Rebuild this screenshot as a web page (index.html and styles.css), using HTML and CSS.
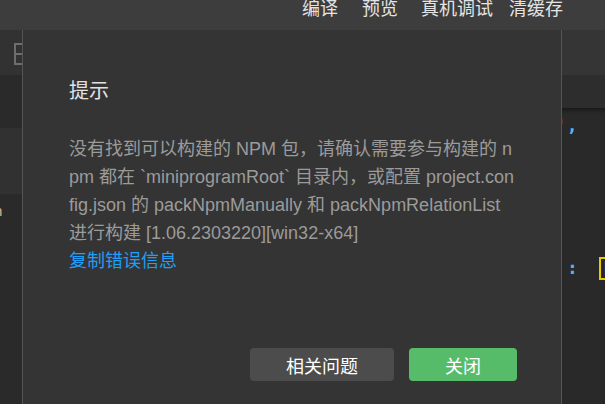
FILE: index.html
```html
<!DOCTYPE html>
<html>
<head>
    <meta charset="UTF-8">
    <title>提示</title>
    <link rel="stylesheet" href="styles.css">
</head>
<body>
    <div class="toolbar">
        <span class="tool">编译</span>
        <span class="tool gap-24">预览</span>
        <span class="tool gap-23">真机调试</span>
        <span class="tool gap-16">清缓存</span>
    </div>

    <div class="workspace">
        <div class="sidebar">
            <div class="side-head">
                <svg class="side-icon" width="16" height="22" viewBox="0 0 16 22">
                    <rect x="1" y="1" width="13" height="20" fill="none" stroke="#6e6e6e" stroke-width="2"/>
                    <line x1="1" y1="11" x2="14" y2="11" stroke="#6e6e6e" stroke-width="2"/>
                </svg>
            </div>
            <div class="side-band dark"></div>
            <div class="side-band light"></div>
            <div class="side-files">
                <div class="file-line">n</div>
            </div>
        </div>

        <div class="editor">
            <div class="tabs"></div>
            <div class="crumbs"></div>
            <div class="code">
                <div class="code-line first"><span class="tok-str">e'</span><span class="tok-punc">,</span></div>
                <div class="code-line second"><span class="tok-punc colon">:</span><span class="bracket">[</span></div>
            </div>
        </div>
    </div>

    <div class="dialog">
        <div class="dialog-title">提示</div>
        <div class="dialog-body">
            没有找到可以构建的 NPM 包，请确认需要参与构建的 n<br>
            pm 都在 `miniprogramRoot` 目录内，或配置 project.con<br>
            fig.json 的 packNpmManually 和 packNpmRelationList<br>
            进行构建 [1.06.2303220][win32-x64]
        </div>
        <a class="copy-link">复制错误信息</a>
        <div class="dialog-actions">
            <button class="btn btn-gray">相关问题</button>
            <button class="btn btn-green">关闭</button>
        </div>
    </div>
</body>
</html>
```

FILE: styles.css
```css
html, body {
    margin: 0;
    height: 100%;
    overflow: hidden;
}
body {
    background-color: #2b2b2b;
    font-family: "Liberation Sans", "Noto Sans CJK SC", sans-serif;
    position: relative;
}
.toolbar {
    height: 30px;
    background-color: #3d3d3d;
    display: flex;
    justify-content: flex-end;
    align-items: flex-start;
    padding-right: 42px;
    box-sizing: border-box;
}
.tool {
    color: #e4e4e4;
    font-size: 18px;
    line-height: 18px;
}
.gap-24 { margin-left: 24px; }
.gap-23 { margin-left: 23px; }
.gap-16 { margin-left: 16px; }

.workspace {
    display: flex;
    height: 374px;
}
.sidebar {
    flex: none;
    width: 540px;
    display: flex;
    flex-direction: column;
}
.side-head {
    height: 45px;
    background-color: #323232;
}
.side-icon {
    margin: 13px 0 0 14px;
    display: block;
}
.side-band.dark {
    height: 53px;
    background-color: #2a2a2a;
}
.side-band.light {
    height: 66px;
    background-color: #313131;
}
.side-files {
    flex: 1;
    background-color: #2a2a2a;
}
.file-line {
    color: #d0b48c;
    font-size: 15px;
    line-height: 20px;
    margin: 7px 0 0 -6px;
}
.editor {
    flex: 1;
    min-width: 0;
    overflow: hidden;
    display: flex;
    flex-direction: column;
}
.tabs {
    height: 45px;
    background-color: #353535;
}
.crumbs {
    height: 33px;
    background-color: #2d2d2d;
}
.code {
    flex: 1;
    background-color: #292929;
    box-shadow: inset 0 4px 4px -2px rgba(0, 0, 0, 0.45);
    font-family: "DejaVu Sans Mono", monospace;
    font-size: 18px;
    white-space: nowrap;
}
.code-line {
    height: 24px;
    line-height: 24px;
    display: flex;
    align-items: center;
}
.code-line.first {
    margin-top: 6px;
    padding-left: 5px;
}
.code-line.second {
    margin-top: 118px;
    padding-left: 27px;
}
.tok-str {
    color: #e0574a;
}
.tok-punc {
    color: #56b6f0;
    font-weight: bold;
}
.colon {
    margin-right: 21px;
}
.bracket {
    color: #ddd;
    border: 2px solid #e8c800;
    padding: 0 6px 0 1px;
    font-size: 15px;
    line-height: 19px;
}

.dialog {
    position: absolute;
    left: 22px;
    top: 30px;
    bottom: 0;
    width: 540px;
    box-sizing: border-box;
    background-color: #343434;
    border-left: 1px solid #555;
    border-right: 1px solid #555;
    padding: 47px 44px 0 46px;
}
.dialog-title {
    color: #e2e2e2;
    font-size: 20px;
    line-height: 28px;
}
.dialog-body {
    margin-top: 30px;
    color: #9b9b9b;
    font-size: 18px;
    line-height: 28px;
    white-space: nowrap;
}
.copy-link {
    display: block;
    color: #1f9ff5;
    font-size: 18px;
    line-height: 28px;
    cursor: pointer;
}
.dialog-actions {
    margin-top: 73px;
    display: flex;
    justify-content: flex-end;
    gap: 15px;
}
.btn {
    height: 33px;
    border: none;
    border-radius: 4px;
    color: #fff;
    font-family: "Liberation Sans", "Noto Sans CJK SC", sans-serif;
    font-size: 18px;
    cursor: pointer;
    padding: 0;
}
.btn-gray {
    width: 144px;
    background-color: #4c4c4c;
}
.btn-green {
    width: 108px;
    background-color: #56bc6a;
}
```
